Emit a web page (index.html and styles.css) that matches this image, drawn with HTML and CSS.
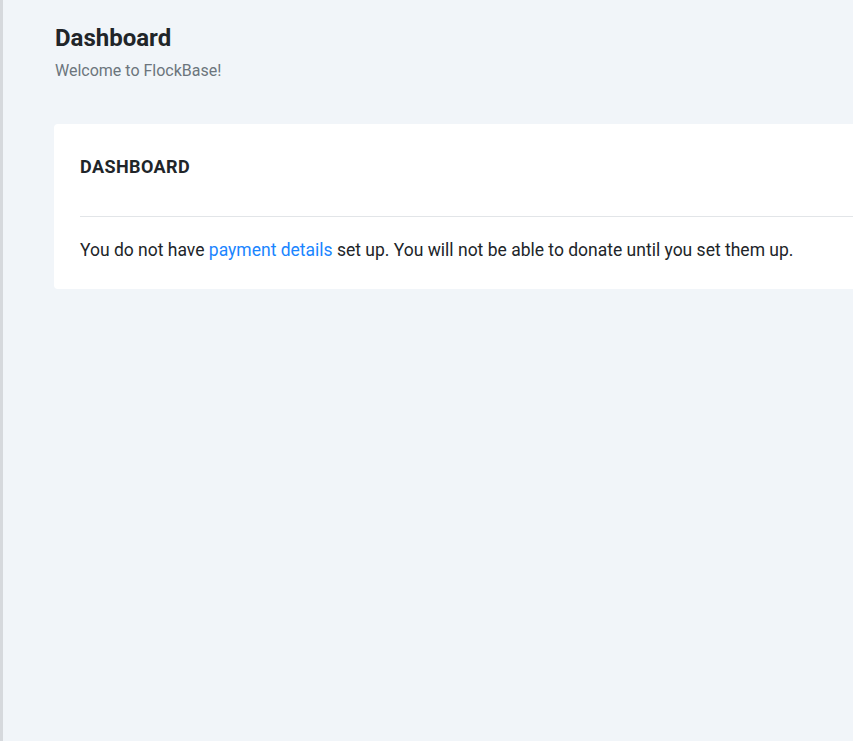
FILE: index.html
```html
<!DOCTYPE html>
<html>
<head>
<meta charset="utf-8">
<link rel="stylesheet" href="styles.css">
</head>
<body>
<div class="layout">
  <aside class="sidebar"></aside>
  <main class="main">
    <header class="page-header">
      <h1 class="page-title">Dashboard</h1>
      <p class="page-subtitle">Welcome to FlockBase!</p>
    </header>
    <section class="card">
      <div class="card-header">
        <h2 class="card-title">DASHBOARD</h2>
      </div>
      <div class="card-body">
        <p class="card-text">You do not have <a href="#" class="link">payment details</a> set up. You will not be able to donate until you set them up.</p>
      </div>
    </section>
  </main>
</div>
</body>
</html>
```
FILE: styles.css
```css
html, body {
  margin: 0;
  padding: 0;
  height: 100%;
  overflow: hidden;
}
body {
  font-family: Roboto, "Liberation Sans", sans-serif;
  background: #f1f5f9;
  color: #212529;
}
.layout {
  display: flex;
  min-height: 741px;
  width: 1100px;
}
.sidebar {
  width: 3px;
  flex: none;
  background: #d6d9dd;
}
.main {
  flex: 1;
  padding: 24px 0 0 52px;
}
.page-title {
  margin: 0;
  font-size: 24px;
  font-weight: 700;
  line-height: 28px;
  color: #212529;
}
.page-subtitle {
  margin: 9px 0 0;
  font-size: 16px;
  line-height: 20px;
  color: #6c757d;
}
.card {
  margin-top: 43px;
  margin-left: -1px;
  background: #fff;
  border-radius: 4px;
}
.card-header {
  padding-top: 32px;
  height: 60px;
  border-bottom: 1px solid #e2e5e8;
  margin-left: 26px;
}
.card-title {
  margin: 0;
  font-size: 18px;
  font-weight: 700;
  line-height: 22px;
  letter-spacing: 0.4px;
  color: #212529;
}
.card-body {
  padding: 21px 26px 27px;
}
.card-text {
  margin: 0;
  font-size: 17.5px;
  line-height: 24px;
  color: #212529;
}
.link {
  color: #1a85ff;
  text-decoration: none;
}
```
